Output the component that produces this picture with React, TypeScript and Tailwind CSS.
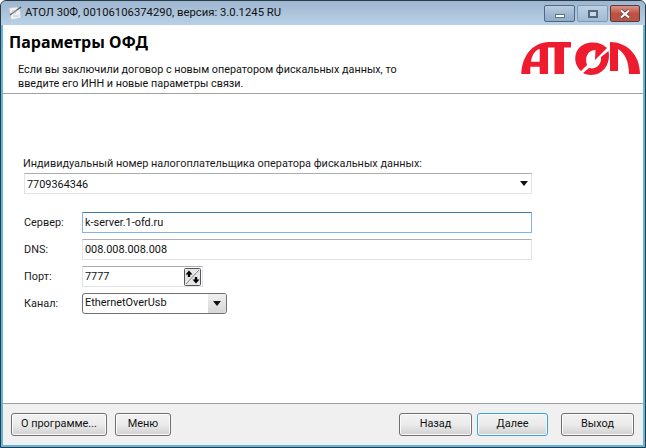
const font = { fontFamily: 'Roboto, "Noto Sans", sans-serif' };

function Logo() {
  return (
    <svg width="120" height="33" viewBox="0 0 120 33" className="block">
      <g fill="#ee1c2e">
        <path
          fillRule="evenodd"
          d="M0.3 32 C1 15 10 1 28 0 L50 0 L50 5.5 L43 5.5 L43 32 L33.5 32 L33.5 5.5 L27 5.5 L27 32 L18.7 32 L18.7 24.7 L9.3 24.7 L9.3 32 Z M10 19.7 L18.7 19.7 L18.7 7 C14 8 11 13 10 19.7 Z"
        />
        <path d="M60 29 C50 20 53 2 70 0.5 C77 0 82 2 86 6 L74 18 L74.5 8 C68 8 63 14 66 23 Z" />
        <path d="M87.5 9 C90 22 82 33 70 33 C67 33 64 32 62 31 L68 26 C75 28 81 22 80 15 Z" />
        <path d="M89 0 C105 0 119 12 119 32 L108 32 C108 20 104 11 97 7 L97 29 L89 29 Z" />
      </g>
    </svg>
  );
}

function Btn({ children, w, def, className = "" }: { children: React.ReactNode; w: string; def?: boolean; className?: string }) {
  return (
    <button
      className={`${w} h-[23px] rounded-[3px] border text-[10.9px] text-[#111] bg-gradient-to-b from-[#f2f2f2] via-[#ebebeb] to-[#d0d0d0] shadow-[inset_0_0_0_1px_#fbfbfb] ${def ? "border-[#3aa0d8]" : "border-[#707070]"} ${className}`}
      style={font}
    >
      {children}
    </button>
  );
}

function Field({ label, children }: { label: string; children: React.ReactNode }) {
  return (
    <div className="flex items-center">
      <span className="w-[58px] text-[10.9px] leading-[16px] text-[#1a1a1a]">{label}</span>
      {children}
    </div>
  );
}

export default function App() {
  return (
    <div className="w-[646px] h-[448px] flex flex-col border border-[#2c3a47] rounded-t-[6px] overflow-hidden bg-[#62b5dc]" style={font}>
      <div className="h-[24px] shrink-0 flex items-center pl-[6px] bg-gradient-to-b from-[#9db6cf] to-[#b9d1e8]">
        <svg width="16" height="16" viewBox="0 0 16 16" className="mr-[2px]">
          <path d="M2 3 L10 2 L13 4 L14 13 L4 15 Z" fill="#eef1f4" stroke="#b8c0c8" strokeWidth="0.7" />
          <path d="M3 10 L14 2" stroke="#555" strokeWidth="1.2" />
          <path d="M5 6 H10 M5 8 H9 M6 11 H12" stroke="#b5bcc4" strokeWidth="0.8" />
        </svg>
        <span className="text-[11.3px] text-[#111] whitespace-nowrap">АТОЛ 30Ф, 00106106374290, версия: 3.0.1245 RU</span>
        <div className="ml-auto flex items-start self-start gap-[2px] mr-[5px]">
          <div className="w-[31px] h-[17px] rounded-[2px] border border-[#52677e] bg-gradient-to-b from-[#b9cde0] via-[#a2bad2] to-[#8eacc9] flex items-center justify-center mt-[4px]">
            <div className="w-[10px] h-[4px] mt-[4px] bg-white border border-[#5d6f82]" />
          </div>
          <div className="w-[31px] h-[17px] rounded-[2px] border border-[#8098b0] bg-gradient-to-b from-[#bcd0e3] to-[#a0bad4] flex items-center justify-center mt-[4px]">
            <div className="w-[10px] h-[8px] border-2 border-[#53667a] bg-[#c8d8e8]" />
          </div>
          <div className="w-[30px] h-[17px] rounded-[2px] border border-[#5a3a3a] bg-gradient-to-b from-[#d9948a] via-[#c0503f] to-[#b4574b] flex items-center justify-center mt-[4px]">
            <svg width="12" height="10" viewBox="0 0 12 10">
              <path d="M2 1.5 L10 8.5 M10 1.5 L2 8.5" stroke="#4d3a3a" strokeWidth="3.4" />
              <path d="M2 1.5 L10 8.5 M10 1.5 L2 8.5" stroke="#fff" strokeWidth="2.2" />
            </svg>
          </div>
        </div>
      </div>
      <div className="flex-1 mx-[2px] mb-[2px] flex flex-col bg-white min-h-0">
        <header className="h-[69px] shrink-0 border-b border-[#a0a0a0] relative pl-[6px] pt-[7px]">
          <h1 className="text-[16px] leading-[20px] font-bold text-black" style={{ fontFamily: '"Noto Sans", sans-serif' }}>Параметры ОФД</h1>
          <p className="mt-[11px] ml-[9px] text-[10.8px] leading-[14px] text-[#111]">
            Если вы заключили договор с новым оператором фискальных данных, то
            <br />
            введите его ИНН и новые параметры связи.
          </p>
          <div className="absolute right-[2px] top-[17px]">
            <Logo />
          </div>
        </header>
        <main className="flex-1 pl-[21px] pt-[62px] flex flex-col">
          <label className="-ml-[1px] text-[10.9px] leading-[16px] text-[#1a1a1a] whitespace-nowrap">
            Индивидуальный номер налогоплательщика оператора фискальных данных:
          </label>
          <div className="mt-[1px] w-[508px] h-[21px] border border-[#e2e3ea] border-t-[#abadb3] rounded-[1px] flex items-center pl-[2px] pr-[3px] justify-between">
            <span className="text-[10.9px] leading-[19px] pt-[1px] text-[#111]">7709364346</span>
            <svg width="8" height="5" viewBox="0 0 8 5"><path d="M0 0 H8 L4 5 Z" fill="#111" /></svg>
          </div>
          <div className="mt-[18px] flex flex-col gap-[6px]">
            <Field label="Сервер:">
              <div className="w-[450px] h-[21px] border border-[#7eb4ea] border-t-[#3d7bad] rounded-[1px] pl-[2px] text-[10.9px] leading-[19px] text-[#111]">k-server.1-ofd.ru</div>
            </Field>
            <Field label="DNS:">
              <div className="w-[450px] h-[21px] border border-[#e2e3ea] border-t-[#abadb3] rounded-[1px] pl-[2px] text-[10.9px] leading-[19px] text-[#111]">008.008.008.008</div>
            </Field>
            <Field label="Порт:">
              <div className="w-[121px] h-[21px] border border-[#e2e3ea] border-t-[#abadb3] rounded-[1px] pl-[2px] pr-[1px] text-[10.9px] leading-[19px] text-[#111] flex justify-between items-center">
                <span>7777</span>
                <svg width="17" height="18" viewBox="0 0 17 18">
                  <rect x="0.5" y="0.5" width="16" height="17" rx="1" fill="#e6e6e6" stroke="#555" />
                  <path d="M15 2 L2 16" stroke="#888" />
                  <path d="M5 2.5 L8.5 6.5 H6.2 V9 H3.8 V6.5 H1.5 Z" fill="#000" />
                  <path d="M12 15.5 L15.5 11.5 H13.2 V9 H10.8 V11.5 H8.5 Z" fill="#000" />
                </svg>
              </div>
            </Field>
            <Field label="Канал:">
              <div className="w-[145px] h-[21px] border border-[#707070] rounded-[3px] flex items-center text-[10.9px] pl-[2px] bg-white text-[#111]">
                <span className="flex-1">EthernetOverUsb</span>
                <div className="w-[18px] h-full rounded-r-[3px] bg-gradient-to-b from-[#f0f0f0] to-[#d6d6d6] flex items-center justify-center">
                  <svg width="8" height="5" viewBox="0 0 8 5"><path d="M0 0 H8 L4 5 Z" fill="#111" /></svg>
                </div>
              </div>
            </Field>
          </div>
        </main>
        <footer className="h-[42px] shrink-0 border-t border-[#a0a0a0] bg-[#f0f0f0] flex items-center pl-[8px] pr-[9px]">
          <Btn w="w-[96px]">О программе...</Btn>
          <Btn w="w-[56px]" className="ml-[8px]">Меню</Btn>
          <Btn w="w-[73px]" className="ml-auto">Назад</Btn>
          <Btn w="w-[71px]" def className="ml-[5px]">Далее</Btn>
          <Btn w="w-[73px]" className="ml-[13px]">Выход</Btn>
        </footer>
      </div>
    </div>
  );
}
